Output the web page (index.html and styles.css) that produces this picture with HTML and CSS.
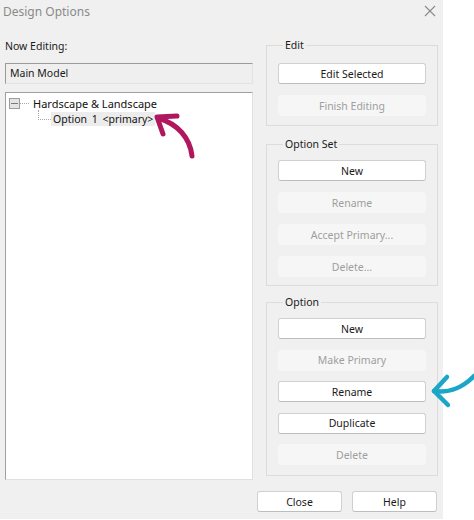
FILE: index.html
```html
<!DOCTYPE html>
<html lang="en">
<head>
    <meta charset="UTF-8">
    <title>Design Options</title>
    <link rel="stylesheet" href="styles.css">
</head>
<body>

    <div class="dialog">
        <div class="titlebar">
            <span class="title">Design Options</span>
            <svg class="close-x" width="12" height="12" viewBox="0 0 12 12">
                <path d="M1 1 L11 11 M11 1 L1 11" stroke="#8a8a8a" stroke-width="1.1" fill="none"/>
            </svg>
        </div>

        <div class="content">
            <!-- left side: what we are editing -->
            <div class="left">
                <div class="label">Now Editing:</div>
                <div class="field">Main Model</div>
                <div class="tree">
                    <div class="node">
                        <span class="toggle"><span class="minus"></span></span>
                        <span class="branch"></span>
                        <span class="node-text">Hardscape &amp; Landscape</span>
                    </div>
                    <div class="node child">
                        <span class="elbow"></span>
                        <span class="node-text selected">Option 1 &lt;primary&gt;</span>
                    </div>
                </div>
            </div>

            <!-- right side: button groups -->
            <div class="right">
                <fieldset class="group group-edit">
                    <legend>Edit</legend>
                    <button class="btn">Edit Selected</button>
                    <button class="btn" disabled>Finish Editing</button>
                </fieldset>

                <fieldset class="group group-set">
                    <legend>Option Set</legend>
                    <button class="btn">New</button>
                    <button class="btn" disabled>Rename</button>
                    <button class="btn" disabled>Accept Primary...</button>
                    <button class="btn" disabled>Delete...</button>
                </fieldset>

                <fieldset class="group group-option">
                    <legend>Option</legend>
                    <button class="btn">New</button>
                    <button class="btn" disabled>Make Primary</button>
                    <button class="btn">Rename</button>
                    <button class="btn">Duplicate</button>
                    <button class="btn" disabled>Delete</button>
                </fieldset>
            </div>
        </div>

        <div class="footer">
            <button class="btn">Close</button>
            <button class="btn">Help</button>
        </div>
    </div>

    <!-- hand drawn annotation arrows -->
    <svg class="marks" width="474" height="520" viewBox="0 0 474 520">
        <g fill="none" stroke-linecap="round" stroke-linejoin="round">
            <path d="M192 156 C190 138 178 124 158 118" stroke="#b0175f" stroke-width="5"/>
            <path d="M177 116 L157 117 L163 134" stroke="#b0175f" stroke-width="5"/>
            <path d="M434 391 C450 393 462 388 474 376" stroke="#1ba6c8" stroke-width="4.5"/>
            <path d="M447 377 L434 391 L448 405" stroke="#1ba6c8" stroke-width="4.5"/>
        </g>
    </svg>

</body>
</html>
```

FILE: styles.css
```css
body {
    margin: 0;
    background: #ffffff;
    font-family: 'Noto Sans', 'Open Sans', sans-serif;
    font-size: 10.5px;
    color: #1a1a1a;
}

.dialog {
    width: 443px;
    height: 519px;
    background: #f0f0f0;
    display: flex;
    flex-direction: column;
}

.titlebar {
    height: 22px;
    display: flex;
    align-items: center;
    justify-content: space-between;
    padding: 0 7px 0 3px;
}

.title {
    font-size: 12px;
    color: #8a8a8a;
}

.content {
    display: flex;
    gap: 13px;
    padding: 0 5px;
}

.left {
    width: 248px;
    padding-top: 16px;
}

.label {
    line-height: 16px;
    margin-bottom: 9px;
}

.field {
    height: 19px;
    line-height: 19px;
    padding-left: 4px;
    background: #efefef;
    border: 1px solid #e2e2e2;
    border-top-color: #9a9a9a;
    border-left-color: #9a9a9a;
}

.tree {
    margin-top: 8px;
    height: 383px;
    background: #ffffff;
    border: 1px solid #e0e0e0;
    border-top-color: #a0a0a0;
    border-left-color: #a0a0a0;
    padding: 3px 0 0 3px;
    font-size: 11px;
    color: #111;
}

.node {
    display: flex;
    align-items: center;
    height: 15px;
}

.toggle {
    width: 9px;
    height: 9px;
    border: 1px solid #9c9c9c;
    background: #e4e4e4;
    display: flex;
    align-items: center;
    justify-content: center;
}

.minus {
    width: 7px;
    height: 1px;
    background: #7a7a7a;
}

.branch {
    width: 9px;
    border-top: 1px dotted #a8a8a8;
    margin-right: 2px;
}

.child {
    padding-left: 29px;
}

.elbow {
    width: 12px;
    height: 9px;
    margin-top: -8px;
    border-left: 1px dotted #a8a8a8;
    border-bottom: 1px dotted #a8a8a8;
}

.node-text {
    padding: 0 2px;
    line-height: 14px;
}

.selected {
    background: #ececec;
    font-size: 10.5px;
    word-spacing: 2px;
}

.right {
    width: 172px;
    display: flex;
    flex-direction: column;
}

.group {
    margin: 0;
    border: 1px solid #dcdcdc;
    padding: 10px 11px 9px 11px;
    display: flex;
    flex-direction: column;
    gap: 11px;
}

.group legend {
    padding: 0 2px;
    margin-left: 5px;
    line-height: 16px;
}

.group-edit {
    margin-top: 15px;
}

.group-set {
    margin-top: 10px;
    padding-top: 8px;
    padding-bottom: 8px;
}

.group-option {
    margin-top: 8px;
    padding-top: 8px;
    padding-bottom: 10px;
    gap: 10.5px;
}

.btn {
    height: 21px;
    padding: 0;
    font-family: inherit;
    font-size: 10.5px;
    color: #1a1a1a;
    background: #ffffff;
    border: 1px solid #d0d0d0;
    border-bottom-color: #bdbdbd;
    border-radius: 3px;
}

.btn:disabled {
    background: #f6f6f6;
    border-color: #f6f6f6;
    color: #9e9e9e;
}

.footer {
    display: flex;
    gap: 10px;
    padding: 11px 0 0 257px;
}

.footer .btn {
    width: 85px;
}

.marks {
    position: absolute;
    top: 0;
    left: 0;
    pointer-events: none;
}
```
